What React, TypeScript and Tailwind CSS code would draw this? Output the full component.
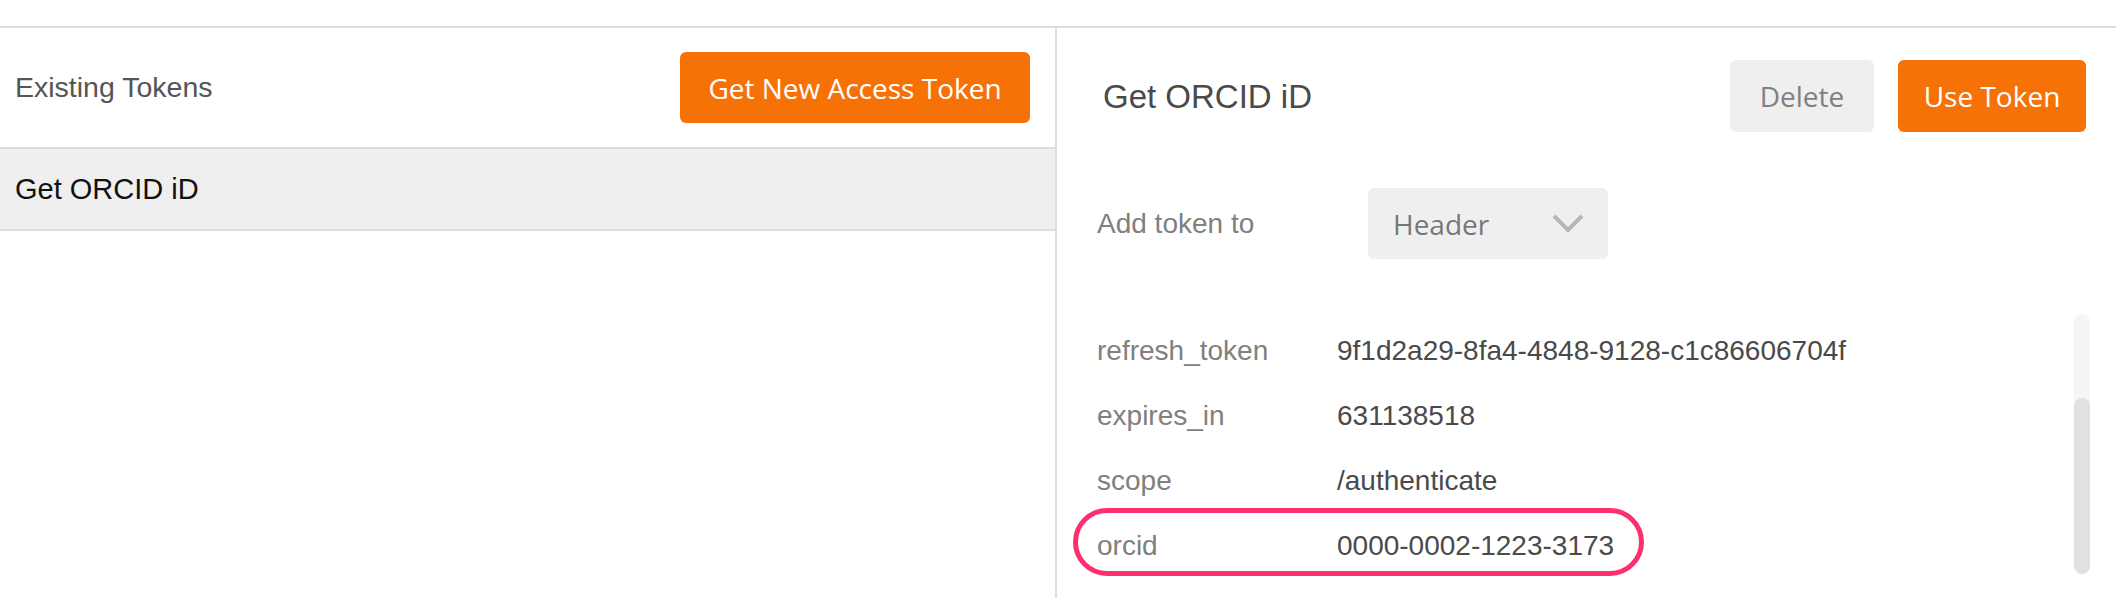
import React from "react";

const sans = { fontFamily: '"Liberation Sans", Arial, sans-serif' };
const open = { fontFamily: '"Open Sans", "Liberation Sans", sans-serif' };

const tokenRows = [
  { key: "refresh_token", value: "9f1d2a29-8fa4-4848-9128-c1c86606704f" },
  { key: "expires_in", value: "631138518" },
  { key: "scope", value: "/authenticate" },
  { key: "orcid", value: "0000-0002-1223-3173", marked: true },
];

const Chevron = () => (
  <svg width="32" height="19" viewBox="0 0 32 19" fill="none">
    <polyline points="2,2 16,16 30,2" stroke="#b6b6b6" strokeWidth="4" strokeLinejoin="miter" />
  </svg>
);

const App = () => {
  return (
    <div className="w-[2116px] h-[598px] overflow-hidden bg-white flex flex-col" style={sans}>
      <div className="h-[26px] shrink-0" />
      <div className="flex flex-1 border-t-2 border-[#dcdcdc]">
        {/* left side: token list */}
        <div className="w-[1057px] shrink-0 border-r-2 border-[#dcdcdc] flex flex-col">
          <div className="h-[121px] flex items-center justify-between pl-[15px] pr-[25px] border-b-2 border-[#dcdcdc]">
            <span className="text-[28.5px] leading-none text-[#555555]">Existing Tokens</span>
            <button
              className="h-[71px] w-[350px] rounded-md bg-[#f67207] text-white text-[28px] leading-none flex items-center justify-center"
              style={open}
            >
              Get New Access Token
            </button>
          </div>
          <div className="h-[82px] bg-[#efefef] border-b-2 border-[#dcdcdc] flex items-center pl-[15px]">
            <span className="text-[29px] leading-none text-[#111111]">Get ORCID iD</span>
          </div>
        </div>

        {/* right side: token detail */}
        <div className="flex-1 flex flex-col">
          <div className="mt-[32px] h-[72px] flex items-center justify-between pl-[46px] pr-[30px]">
            <span className="text-[33px] leading-none text-[#4a4a4a]">Get ORCID iD</span>
            <div className="flex gap-[24px]">
              <button
                className="h-[72px] w-[144px] rounded-md bg-[#efefef] text-[#808080] text-[28px] leading-none flex items-center justify-center"
                style={open}
              >
                Delete
              </button>
              <button
                className="h-[72px] w-[188px] rounded-md bg-[#f67207] text-white text-[28px] leading-none flex items-center justify-center"
                style={open}
              >
                Use Token
              </button>
            </div>
          </div>

          <div className="mt-[56px] flex items-center pl-[40px]">
            <span className="w-[271px] text-[28px] leading-none text-[#808080]">Add token to</span>
            <div className="h-[71px] w-[240px] rounded-md bg-[#efefef] flex items-center justify-between pl-[25px] pr-[24px]">
              <span className="text-[28px] leading-none text-[#777777]" style={open}>Header</span>
              <Chevron />
            </div>
          </div>

          <div className="mt-[55px] flex pr-[26px]">
            <div className="flex-1 pl-[40px] pt-[4px] flex flex-col">
              {tokenRows.map((row) => (
                <div key={row.key} className="relative h-[65px] flex items-center">
                  {row.marked && (
                    <span className="absolute left-[-24px] top-[-5px] w-[571px] h-[68px] rounded-full border-[5px] border-[#fe2f6d]" />
                  )}
                  <span className="w-[240px] text-[28px] leading-none text-[#808080]">{row.key}</span>
                  <span className="text-[28px] leading-none text-[#4a4a4a]">{row.value}</span>
                </div>
              ))}
            </div>
            <div className="w-[16px] h-[260px] rounded-full bg-[#f5f5f5] flex flex-col justify-end">
              <div className="h-[176px] rounded-full bg-[#e1e1e1]" />
            </div>
          </div>
        </div>
      </div>
    </div>
  );
};

export default App;
